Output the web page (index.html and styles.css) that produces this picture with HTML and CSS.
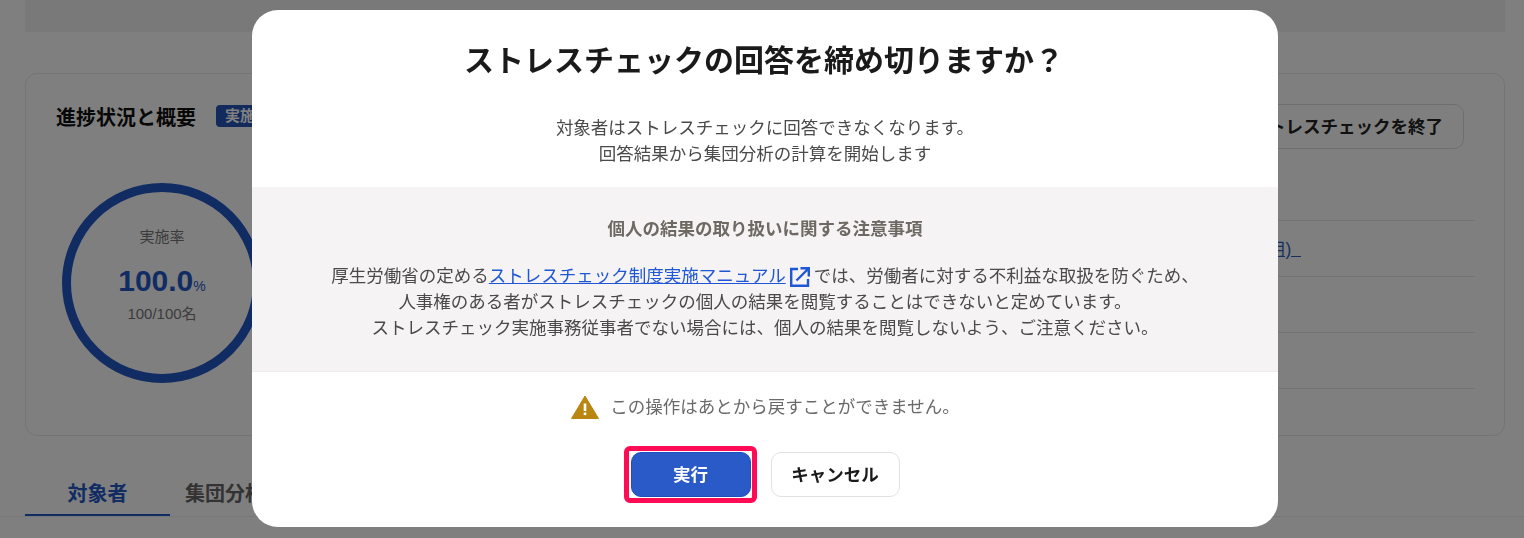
FILE: index.html
```html
<!DOCTYPE html>
<html lang="ja">
<head>
<meta charset="utf-8">
<title>ストレスチェック</title>
<link rel="stylesheet" href="styles.css">
</head>
<body>
<div class="page">
  <div class="topbar"></div>
  <section class="card">
    <div class="card-left">
      <div class="card-head">
        <h2 class="card-title">進捗状況と概要</h2>
        <span class="badge">実施中</span>
      </div>
      <div class="ring">
        <span class="ring-label">実施率</span>
        <span class="ring-value">100.0<small class="ring-unit">%</small></span>
        <span class="ring-count">100/100名</span>
      </div>
    </div>
    <div class="card-right">
      <button class="end-btn">ストレスチェックを終了</button>
      <ul class="info-list">
        <li class="info-row"><a class="info-link" href="#">結果の閲覧(専用)&nbsp;&nbsp;</a></li>
        <li class="info-row"></li>
        <li class="info-row"></li>
        <li class="info-row"></li>
      </ul>
    </div>
  </section>
  <nav class="tabs">
    <span class="tab tab-active">対象者</span>
    <span class="tab">集団分析</span>
  </nav>
</div>
<div class="overlay">
  <div class="modal">
    <h1 class="modal-title">ストレスチェックの回答を締め切りますか？</h1>
    <p class="modal-lead">対象者はストレスチェックに回答できなくなります。<br>回答結果から集団分析の計算を開始します</p>
    <div class="notice">
      <h3 class="notice-title">個人の結果の取り扱いに関する注意事項</h3>
      <p class="notice-text">厚生労働省の定める<a class="notice-link" href="#">ストレスチェック制度実施マニュアル</a><svg class="ext-icon" viewBox="0 0 22 22" aria-hidden="true"><path d="M9 3H2.2v16.8H19V13" fill="none" stroke="#1f57d6" stroke-width="2.4"/><path d="M7.5 14.5 19 3M11.5 2.2h8.3v8.3" fill="none" stroke="#1f57d6" stroke-width="2.4"/></svg>では、労働者に対する不利益な取扱を防ぐため、<br>人事権のある者がストレスチェックの個人の結果を閲覧することはできないと定めています。<br>ストレスチェック実施事務従事者でない場合には、個人の結果を閲覧しないよう、ご注意ください。</p>
    </div>
    <div class="warning">
      <svg class="warn-icon" viewBox="0 0 28 24" aria-hidden="true"><path d="M14 1 27.5 23.5H.5Z" fill="#b98612" stroke="#b98612" stroke-linejoin="round"/><rect x="12.7" y="8.5" width="2.6" height="7.5" fill="#fff"/><rect x="12.7" y="17.5" width="2.6" height="2.6" fill="#fff"/></svg>
      <span>この操作はあとから戻すことができません。</span>
    </div>
    <div class="actions">
      <button class="btn btn-primary">実行</button>
      <button class="btn btn-cancel">キャンセル</button>
    </div>
  </div>
</div>
</body>
</html>
```
FILE: styles.css
```css
* { box-sizing: border-box; }
html, body { margin: 0; height: 100%; }
body {
  font-family: "Liberation Sans", "Noto Sans CJK JP", sans-serif;
  background: #fff;
  color: #222;
  overflow: hidden;
}
.page { height: 538px; display: flex; flex-direction: column; }
.topbar { height: 32px; margin: 0 19px 0 25px; background: #f2f2f2; flex: none; }
.card {
  flex: none;
  margin: 41px 19px 0 25px;
  height: 363px;
  border: 1px solid #e8e8e8;
  border-radius: 12px;
  display: flex;
  justify-content: space-between;
  padding: 30px 29px 0 30px;
}
.card-left { width: 240px; }
.card-head { display: flex; align-items: center; gap: 20px; height: 28px; margin-top: -2px; }
.card-title { margin: 0; font-size: 20px; font-weight: 700; color: #111; white-space: nowrap; }
.badge {
  background: #2454b8; color: #fff; font-size: 15px; font-weight: 700;
  padding: 0 9px; height: 22px; line-height: 22px; border-radius: 4px; white-space: nowrap;
}
.ring {
  margin: 53px 0 0 6px;
  width: 200px; height: 200px;
  border: 9px solid #2358c6;
  border-radius: 50%;
  display: flex; flex-direction: column; align-items: center;
  padding-top: 35px;
}
.ring-label { font-size: 15px; color: #777; line-height: 20px; }
.ring-value { font-size: 30px; font-weight: 700; color: #2358c6; line-height: 34px; margin-top: 17px; }
.ring-unit { font-size: 14px; font-weight: 400; }
.ring-count { font-size: 15px; color: #777; line-height: 20px; margin-top: 1px; }
.card-right { width: 375px; display: flex; flex-direction: column; align-items: flex-end; }
.end-btn {
  width: 240px; height: 45px; margin-right: 11px;
  border: 1px solid #ddd; border-radius: 10px; background: #fff;
  font: 700 17.5px "Liberation Sans", "Noto Sans CJK JP", sans-serif; color: #222;
  white-space: nowrap; padding: 0 20px 2px 0; text-align: right;
  flex: none;
}
.info-list { list-style: none; margin: 71px 0 0; padding: 0; width: 100%; }
.info-row { height: 56px; border-top: 1px solid #e8e8e8; display: flex; align-items: center; }
.info-link { display: block; width: 201px; text-align: right; font-size: 17.5px; color: #2f5fbf; white-space: nowrap; margin-top: -3px; }
.tabs {
  flex: none; margin-top: 37px; height: 44px; padding-left: 25px;
  display: flex; align-items: flex-start; border-bottom: 1px solid #eee; gap: 15px;
}
.tab { font-size: 20px; font-weight: 700; color: #666; height: 43px; line-height: 42px; white-space: nowrap; }
.tab-active { width: 145px; text-align: center; color: #2358c6; border-bottom: 2px solid #2358c6; }

.overlay {
  position: fixed; inset: 0;
  background: rgba(0, 0, 0, .5);
  display: flex; justify-content: center; align-items: flex-start;
}
.modal {
  margin: 10px 0 0 6px;
  width: 1026px; height: 517px;
  background: #fff; border-radius: 26px;
  display: flex; flex-direction: column; align-items: center;
  overflow: hidden;
}
.modal-title {
  margin: 30px 2px 0 0; font-size: 30px; line-height: 42px; font-weight: 700; color: #1a1a1a;
}
.modal-lead {
  margin: 33px 0 0; font-size: 17.5px; line-height: 26px; color: #4a4a4a; text-align: center;
}
.notice {
  margin-top: 20px; width: 100%; height: 185px;
  background: #f5f3f4; border-bottom: 1px solid #eeecec;
  padding-top: 29px; text-align: center;
}
.notice-title { margin: 0; font-size: 17.5px; line-height: 26px; font-weight: 700; color: #6e6962; }
.notice-text { margin: 21px 0 0; font-size: 17.5px; line-height: 26px; color: #4a4a4a; white-space: nowrap; }
.notice-link { color: #1f57d6; text-decoration: underline; }
.ext-icon { width: 22px; height: 22px; margin: 0 3px 0 3px; vertical-align: -6px; }
.warning {
  margin-top: 22px; display: flex; align-items: center; gap: 11px; padding-left: 1px;
  font-size: 17.5px; line-height: 26px; color: #6a6a6a;
}
.warn-icon { width: 28px; height: 24px; flex: none; }
.actions { margin-top: 32px; display: flex; gap: 20px; }
.btn {
  height: 45px; border-radius: 10px; padding: 0 0 3px;
  font: 700 17.5px "Liberation Sans", "Noto Sans CJK JP", sans-serif;
}
.btn-primary {
  position: relative;
  width: 120px; color: #fff; background: #2a5ac8; border: 1px solid #1f4fbd;
}
.btn-primary::after {
  content: "";
  position: absolute;
  inset: -7px -7px -7px -8px;
  border: 5px solid #ff0a54;
  border-radius: 6px;
}
.btn-cancel { width: 129px; color: #1a1a1a; background: #fff; border: 1px solid #e2e2e2; }
```
